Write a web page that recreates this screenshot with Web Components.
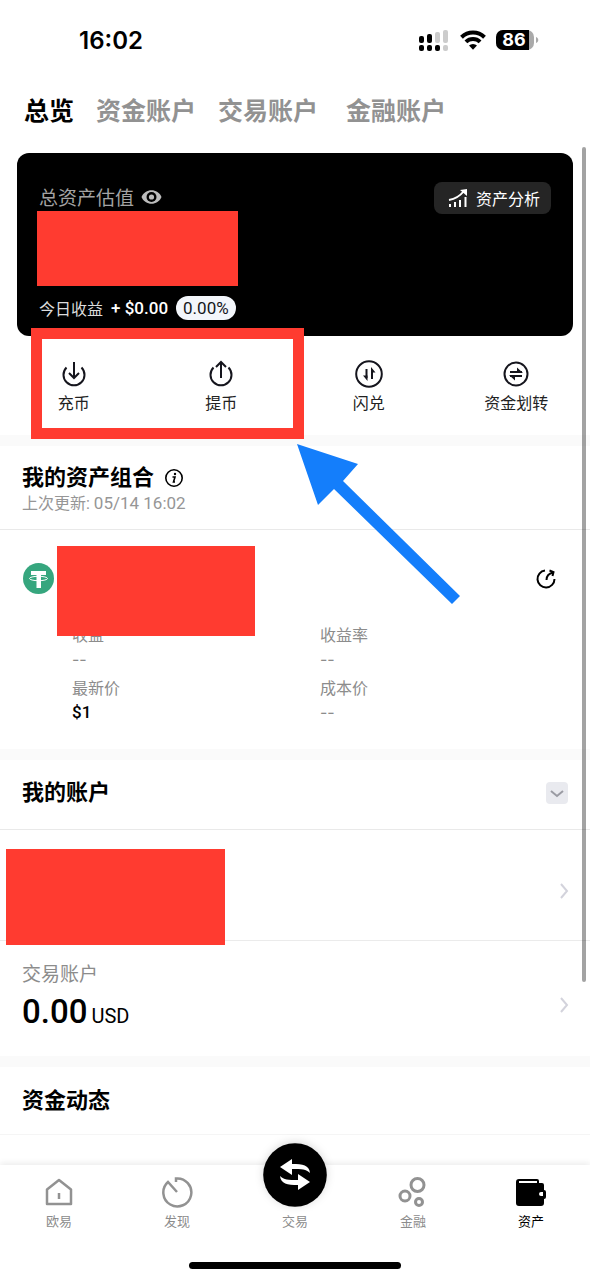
<!DOCTYPE html>
<html lang="zh-CN">
<head>
<meta charset="utf-8">
<meta name="viewport" content="width=device-width, initial-scale=1">
<title>资产</title>
<style>
  body {
    margin: 0;
    background: #fff;
    color: #000;
    font-family: Roboto, "Noto Sans CJK SC", sans-serif;
    font-size: 16px;
  }
</style>
</head>
<body>
<asset-page></asset-page>

<script>
const define = (name, markup) => {
  customElements.define(name, class extends HTMLElement {
    constructor() {
      super();
      const template = document.createElement('template');
      template.innerHTML = markup;
      this.attachShadow({ mode: 'open' }).append(template.content.cloneNode(true));
    }
  });
};

define('status-bar', `
  <style>
    :host { display: flex; align-items: center; justify-content: space-between; height: 80px; padding: 0 51px 0 79px; }
    time { padding-top: 2px; font: 600 24px/32px Inter, sans-serif; }
    .signs { display: flex; align-items: center; gap: 10px; }
    svg { display: block; }
    .battery { position: relative; display: flex; align-items: center; }
    .level { position: absolute; left: 0; width: 36px; text-align: center; color: #fff; font: 700 18px/22px Inter, sans-serif; }
  </style>
  <time>16:02</time>
  <div class="signs">
    <svg width="31" height="22" viewBox="0 0 31 22">
      <g fill="#000"><rect y="7" width="5" height="7" rx="2"/><rect x="8" y="5" width="5" height="9" rx="2"/><rect y="16" width="5" height="6" rx="2"/><rect x="8" y="16" width="5" height="6" rx="2"/><rect x="16" y="16" width="5" height="6" rx="2"/></g>
      <g fill="#ccc"><rect x="16" y="3" width="5" height="11" rx="2"/><rect x="24" y="1" width="5" height="13" rx="2"/><rect x="24" y="16" width="5" height="6" rx="2"/></g>
    </svg>
    <svg width="26" height="22" viewBox="0 0 26 22" fill="none" stroke="#000" stroke-width="4">
      <path d="M1.5 8.200a16.500 16.500 0 0 1 23 0M5.900 12.900a10.300 10.300 0 0 1 14.200 0"/><path d="M13 20.800l-4-4.200a5.800 5.800 0 0 1 8 0z" fill="#000" stroke="none"/>
    </svg>
    <div class="battery">
      <svg width="43" height="22" viewBox="0 0 43 22">
        <rect y="1" width="38" height="20" rx="7" fill="#aaa"/><path d="M7 1h26v20H7a7 7 0 0 1-7-7V8a7 7 0 0 1 7-7z"/><path d="M40 8c3 1 3 5 0 6z" fill="#aaa"/>
      </svg>
      <span class="level">86</span>
    </div>
  </div>
`);

define('account-tabs', `
  <style>
    :host { display: block; }
    nav { display: flex; gap: 22px; padding: 14px 24px 15px; }
    ::slotted(a) { color: #929292; font-size: 25px; font-weight: 700; line-height: 36px; text-decoration: none; white-space: nowrap; }
    ::slotted(a[aria-current]) { color: #000; }
    ::slotted(a[data-badge-room]) { padding-right: 6px; }
  </style>
  <nav aria-label="账户"><slot></slot></nav>
`);

define('balance-card', `
  <style>
    :host { display: flex; justify-content: space-between; align-items: flex-start; margin: 0 17px; padding: 29px 22px 16px; border-radius: 12px; background: #000; color: #fff; }
    .label { display: flex; align-items: center; gap: 7px; height: 29px; color: #a3a3a3; font-size: 19px; }
    button { border: 0; padding: 0; background: none; color: inherit; font: inherit; cursor: pointer; }
    svg { display: block; }
    mask-block { width: 201px; height: 75px; margin-left: -2px; }
    .profit { display: flex; align-items: center; height: 24px; margin-top: 10px; white-space: pre; }
    .profit span { color: #dcdcdc; margin-right: 8px; }
    .profit b { font-size: 17px; font-weight: 500; }
    .pill { margin-left: 8px; padding: 0 7px; border-radius: 12px; background: #f3f6fb; color: #15171c; font-size: 17px; line-height: 24px; }
    .analysis { display: flex; align-items: center; gap: 8px; height: 32px; padding: 0 11px 0 14px; border-radius: 8px; background: #252525; }
  </style>
  <div>
    <div class="label">总资产估值
      <button aria-label="隐藏金额"><svg width="21" height="16" viewBox="0 0 21 16"><path d="M.5 8C4-1 17-1 20.500 8 17 17 4 17 .5 8z" fill="#bcbcbc"/><circle cx="10.500" cy="8" r="5" fill="#000"/><circle cx="10.500" cy="8" r="2.600" fill="#bcbcbc"/></svg></button>
    </div>
    <mask-block></mask-block>
    <div class="profit"><span>今日收益</span><b>+ $0.00</b><div class="pill">0.00%</div></div>
  </div>
  <button class="analysis"><svg width="20" height="20" viewBox="0 0 20 20" fill="none" stroke="#fff" stroke-width="2"><path d="M2 19v-3M7 19v-5M12 19v-7M17.500 19V9M1 12c6-1 11-4 15-9"/><path d="M12 2l7-1v7z" fill="#fff" stroke="none"/></svg>资产分析</button>
`);

define('mask-block', `<style>:host { display: block; background: #ff3b30; }</style>`);

define('quick-actions', `
  <style>
    :host { position: relative; display: grid; grid-template-columns: repeat(4, 1fr); padding: 24px 0 21px; }
    .frame { position: absolute; left: 31px; top: -8px; width: 251px; height: 89px; border: 11px solid #ff3b30; pointer-events: none; z-index: 2; }
    .arrow { position: absolute; left: 297px; top: 108px; pointer-events: none; z-index: 2; }
  </style>
  <slot></slot>
  <div class="frame"></div>
  <svg class="arrow" width="164" height="161" viewBox="0 0 164 161"><path d="M0 0l61 20-15 17 117 115-8 8L37 45 21 61z" fill="#147efb"/></svg>
`);

define('quick-action', `
  <style>
    :host { display: flex; justify-content: center; }
    button { display: grid; justify-items: center; gap: 6px; border: 0; padding: 0; background: none; color: #222; font: inherit; line-height: 20px; white-space: nowrap; }
    ::slotted(svg) { display: block; fill: none; stroke: #15151d; stroke-width: 2; }
  </style>
  <button><slot name="icon"></slot><slot></slot></button>
`);

define('page-section', `
  <style>
    :host { display: block; border-top: 11px solid #fafafa; }
    header { display: flex; align-items: center; justify-content: space-between; padding: 16px 22px 19px; border-bottom: 1px solid #e9e9e9; }
    .title { display: flex; align-items: center; gap: 10px; }
    h2 { margin: 0; font-size: 22px; line-height: 34px; font-weight: 700; }
    :host([detailed]) header { padding: 16px 22px; }
    :host([detailed]) h2 { line-height: 32px; }
    :host([faint]) header { padding: 17px 22px 16px; border-color: #f5f5f5; }
    ::slotted(p) { margin: 0; color: #969696; line-height: 18px; }
    ::slotted(button) { display: block; border: 0; padding: 0; background: none; }
  </style>
  <header>
    <div><div class="title"><h2><slot name="title"></slot></h2><slot name="info"></slot></div><slot name="note"></slot></div>
    <slot name="control"></slot>
  </header>
  <slot></slot>
`);

define('coin-holding', `
  <style>
    :host { position: relative; display: block; padding-bottom: 25px; }
    .head { display: flex; justify-content: space-between; align-items: center; padding: 33px 32px 0 23px; }
    svg { display: block; }
    button { border: 0; padding: 0; background: none; }
    dl { display: grid; grid-template-columns: 1fr 1fr; row-gap: 7px; margin: 31px 0 0; padding: 0 22px 0 72px; }
    dt { color: #8c8c8c; line-height: 22px; }
    dd { margin: 0; color: #8c8c8c; font-family: Inter, sans-serif; line-height: 24px; }
    dd.price { color: #000; font-family: inherit; font-size: 17px; font-weight: 500; }
    mask-block { position: absolute; left: 57px; top: 16px; width: 198px; height: 90px; }
  </style>
  <div class="head">
    <svg width="31" height="31" viewBox="0 0 31 31" role="img" aria-label="USDT"><circle cx="15.500" cy="15.500" r="15.500" fill="#36a67e"/><path d="M8 8h15v4h-5v13h-4.500V12H8z" fill="#fff"/><ellipse cx="15.500" cy="15.500" rx="9" ry="2.200" fill="none" stroke="#fff"/><path d="M14 13h3.500v3H14z" fill="#fff"/></svg>
    <button aria-label="分享"><svg width="24" height="24" viewBox="0 0 24 24" fill="none" stroke="#000" stroke-width="2"><path d="M11 3.500a8.500 8.500 0 1 0 9.500 8.500"/><path d="M12.500 13c0-4 2-6.500 6.500-7.500M15.500 3.500l4 1.500-1 4"/></svg></button>
  </div>
  <dl>
    <div><dt>收益</dt><dd>--</dd></div>
    <div><dt>收益率</dt><dd>--</dd></div>
    <div><dt>最新价</dt><dd class="price">$1</dd></div>
    <div><dt>成本价</dt><dd>--</dd></div>
  </dl>
  <mask-block></mask-block>
`);

define('account-row', `
  <style>
    :host { position: relative; display: block; border-bottom: 1px solid #ebebeb; }
    :host(:last-of-type) { border: 0; }
    a { display: flex; align-items: center; justify-content: space-between; min-height: 110px; padding: 0 20px 0 22px; color: inherit; text-decoration: none; }
    :host(:last-of-type) a { min-height: 115px; }
    ::slotted(div) { line-height: 26px; font-size: 19px; color: #8c8c8c; }
    ::slotted(strong) { font-size: 33px; font-weight: 500; line-height: 48px; }
    ::slotted(small) { font-size: 20px; margin-left: 4px; }
    svg { display: block; padding-top: 12px; }
    mask-block { display: none; position: absolute; z-index: 1; left: 6px; top: 19px; width: 219px; height: 96px; }
    :host([masked]) mask-block { display: block; }
  </style>
  <a href="#account"><span><slot></slot></span>
    <svg width="11" height="18" viewBox="0 0 11 18" fill="none" stroke="#d3d3dc" stroke-width="2"><path d="M2 2l6 7-6 7"/></svg></a>
  <mask-block></mask-block>
`);

define('scroll-thumb', `<style>:host { position: absolute; right: 4px; top: 2px; bottom: 183px; width: 4px; border-radius: 2px; background: #0000005c; z-index: 3; }</style>`);

define('tab-bar', `
  <style>
    :host { display: block; position: relative; margin-top: auto; background: #fff; box-shadow: 0 -2px 6px #00000014; }
    nav { display: grid; grid-template-columns: repeat(5, 1fr); padding-top: 12px; }
    .home { width: 36%; height: 7px; margin: 31px auto 0; border-radius: 4px; background: #000; }
    footer { padding-bottom: 11px; }
  </style>
  <nav aria-label="主导航"><slot></slot></nav>
  <footer><div class="home"></div></footer>
`);

define('tab-item', `
  <style>
    :host { display: block; }
    a { position: relative; display: grid; grid-template-rows: 32px 18px; row-gap: 4px; justify-items: center; color: #8c8c8c; font-size: 13px; line-height: 18px; text-decoration: none; }
    ::slotted(svg) { display: block; fill: none; stroke: #929292; stroke-width: 3; }
    :host([selected]) a { color: #000; }
    :host([selected]) ::slotted(svg) { fill: #000; stroke: none; }
    :host([primary]) ::slotted(svg) { position: absolute; top: -34px; stroke: none; filter: drop-shadow(0 -1px 4px #00000026); }
    .label { grid-row: 2; }
  </style>
  <a href="#tab"><slot name="icon"></slot><span class="label"><slot></slot></span></a>
`);

define('asset-page', `
  <style>
    :host { display: flex; flex-direction: column; min-height: 100vh; }
    main { position: relative; flex: 1; padding-top: 8px; }
    .info { display: block; }
    time { font-size: 17px; }
  </style>
  <status-bar></status-bar>
  <account-tabs>
    <a href="#overview" aria-current="page">总览</a><a href="#funding">资金账户</a><a href="#trading" data-badge-room>交易账户</a><a href="#finance">金融账户</a>
  </account-tabs>
  <main>
    <balance-card></balance-card>
    <quick-actions>
      <quick-action><svg slot="icon" width="28" height="28" viewBox="0 0 28 28"><path d="M6.500 7.500a10.500 10.500 0 1 0 15 0M14 2v15M9 13l5 5 5-5"/></svg>充币</quick-action>
      <quick-action><svg slot="icon" width="28" height="28" viewBox="0 0 28 28"><path d="M6.500 7.500a10.500 10.500 0 1 0 15 0M14 18V3M9 7l5-5 5 5"/></svg>提币</quick-action>
      <quick-action><svg slot="icon" width="28" height="28" viewBox="0 0 28 28"><circle cx="14" cy="14" r="12.800"/><path d="M11.500 9v9M17 19v-9"/><path d="M8 15.500h4.500V21zM20.500 12.500H16V7z" fill="#15151d" stroke="none"/></svg>闪兑</quick-action>
      <quick-action><svg slot="icon" width="28" height="28" viewBox="0 0 28 28"><circle cx="14" cy="14" r="11.500"/><path d="M8 12h12M20 16H8"/><path d="M15 7.500l6 5.500h-6zM13 20.500L7 15h6z" fill="#15151d" stroke="none"/></svg>资金划转</quick-action>
    </quick-actions>

    <page-section detailed>
      <span slot="title">我的资产组合</span>
      <button slot="info" aria-label="说明"><svg class="info" width="20" height="20" viewBox="0 0 20 20" fill="none" stroke="#000" stroke-width="1.600"><circle cx="10" cy="10" r="8.200"/><path d="M8.500 9H11l-1.500 5H11"/><circle cx="11" cy="6" r="1.200" fill="#000" stroke="none"/></svg></button>
      <p slot="note">上次更新: <time>05/14 16:02</time></p>
      <coin-holding></coin-holding>
    </page-section>

    <page-section>
      <span slot="title">我的账户</span>
      <button slot="control" aria-label="展开"><svg class="info" width="22" height="22" viewBox="0 0 22 22"><rect width="22" height="22" rx="4" fill="#e9eaef"/><path d="M5 9l6 5 6-5" fill="none" stroke="#9a9ba3" stroke-width="2"/></svg></button>
      <account-row masked></account-row>
      <account-row><div>交易账户</div><strong>0.00</strong><small>USD</small></account-row>
    </page-section>

    <page-section faint><span slot="title">资金动态</span></page-section>
    <scroll-thumb></scroll-thumb>
  </main>
  <tab-bar>
    <tab-item><svg slot="icon" width="32" height="32" viewBox="0 0 32 32"><path d="M4 12.500L16 3l12 9.500V27H4zM16 16v6" stroke-width="2.500" stroke-linejoin="round"/></svg>欧易</tab-item>
    <tab-item><svg slot="icon" width="32" height="32" viewBox="0 0 32 32"><path d="M15 5V1.500A14 14 0 1 1 7 5l9 10" stroke-width="2.500"/></svg>发现</tab-item>
    <tab-item primary><svg slot="icon" width="64" height="64" viewBox="0 0 64 64"><circle cx="32" cy="32" r="31.800" fill="#000"/><path d="M17 24l12-8v5c11 0 17 1 18 9-4-4-8-4-18-4v6zM47 39l-12 8v-5c-11 0-17-1-18-9 4 4 8 4 18 4v-6z" fill="#fff"/></svg>交易</tab-item>
    <tab-item><svg slot="icon" width="32" height="32" viewBox="0 0 32 32"><circle cx="20.500" cy="8" r="6.500"/><circle cx="8" cy="19" r="5"/><circle cx="22" cy="25" r="3.500"/></svg>金融</tab-item>
    <tab-item selected><svg slot="icon" width="32" height="32" viewBox="0 0 32 32"><path fill-rule="evenodd" d="M4 2h18q2 0 2 2v2h3q2 0 2 2v5q2 0 2 2v5q0 2-2 2v4q0 3-3 3H4q-3 0-3-3V5q0-3 3-3zM4 4v2h18V4zM26 15q-2 0-2 2t2 2h2v-4z"/></svg>资产</tab-item>
  </tab-bar>
`);
</script>
</body>
</html>
